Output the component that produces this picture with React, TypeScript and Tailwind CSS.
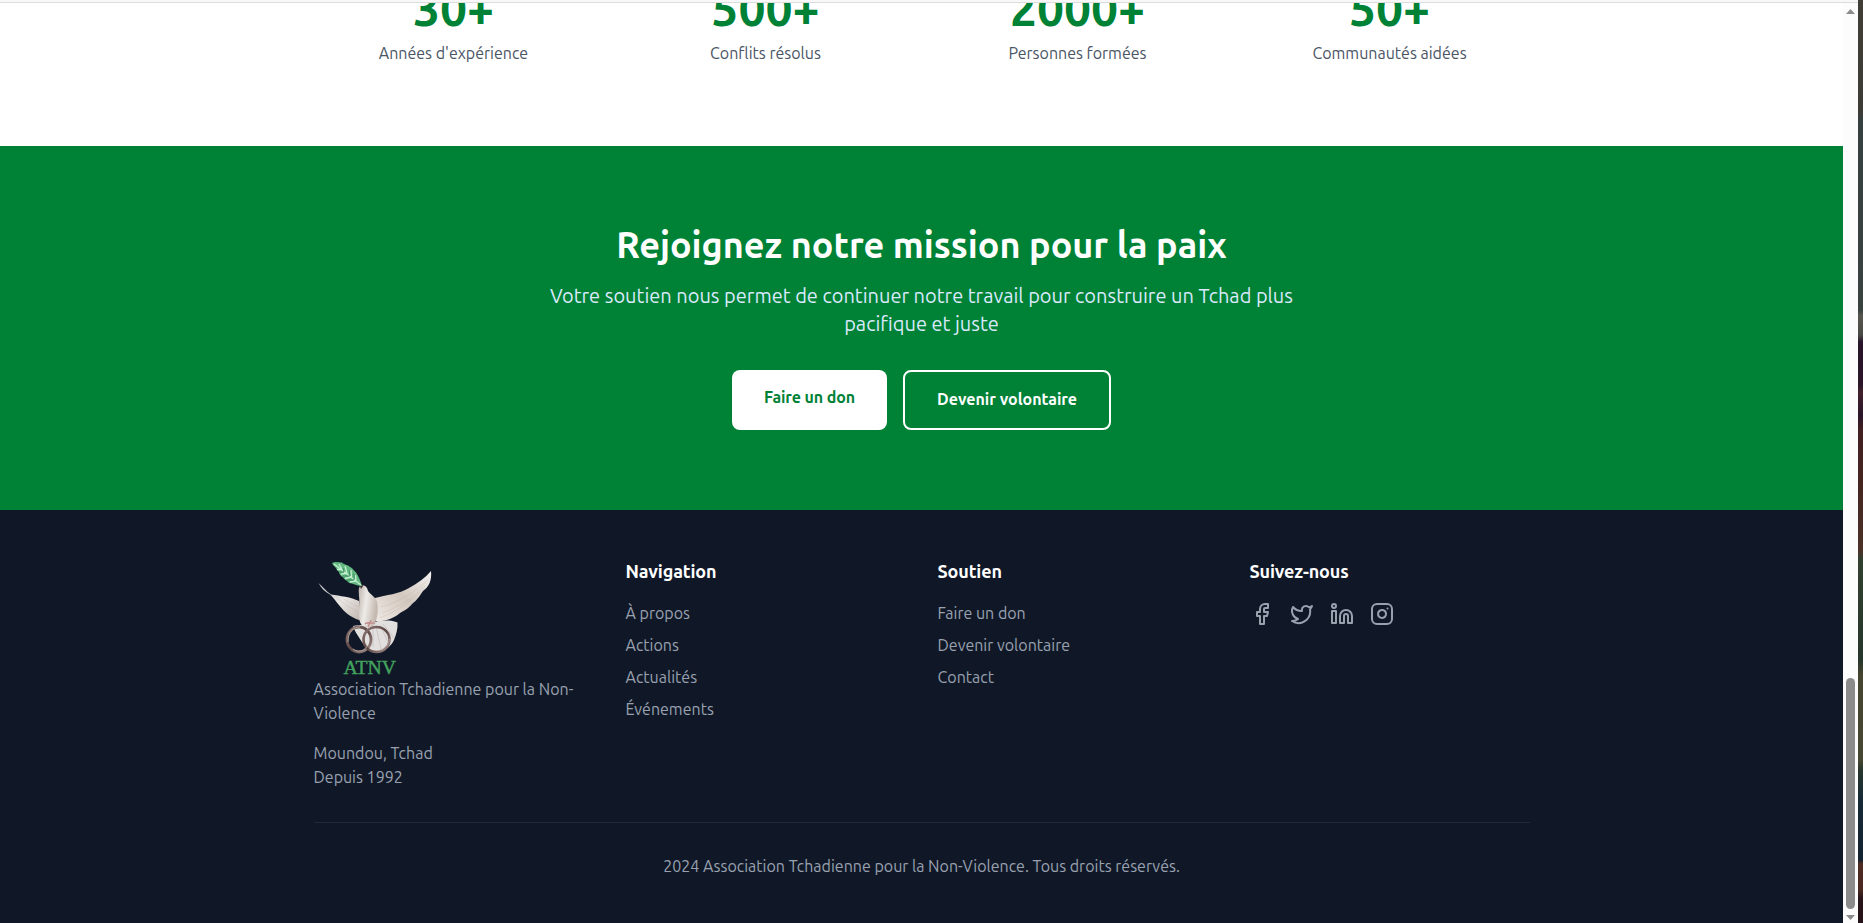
import type { ReactNode } from "react";
import { Facebook, Instagram, Linkedin, Twitter } from "lucide-react";

const stats = [
  { value: "30+", label: "Années d'expérience" },
  { value: "500+", label: "Conflits résolus" },
  { value: "2000+", label: "Personnes formées" },
  { value: "50+", label: "Communautés aidées" },
];

const navigation = ["À propos", "Actions", "Actualités", "Événements"];
const support = ["Faire un don", "Devenir volontaire", "Contact"];
const socials = [Facebook, Twitter, Linkedin, Instagram];

function Logo() {
  return (
    <svg viewBox="0 0 120 120" className="mt-px -mb-px h-[120px] w-[120px]" role="img">
      <defs>
        <linearGradient id="wingRight" x1="0" y1="1" x2="1" y2="0">
          <stop offset="0" stopColor="#efe9e4" />
          <stop offset="0.5" stopColor="#d3c8bf" />
          <stop offset="1" stopColor="#f4f2f1" />
        </linearGradient>
        <linearGradient id="wingLeft" x1="0" y1="0" x2="1" y2="1">
          <stop offset="0" stopColor="#b9b9bd" />
          <stop offset="0.5" stopColor="#e9e6e4" />
          <stop offset="1" stopColor="#bfb3ab" />
        </linearGradient>
        <linearGradient id="body" x1="0" y1="0" x2="1" y2="0.3">
          <stop offset="0" stopColor="#bdb3ac" />
          <stop offset="0.45" stopColor="#eeebe8" />
          <stop offset="1" stopColor="#c4b8af" />
        </linearGradient>
        <linearGradient id="ring" x1="0" y1="0" x2="1" y2="1">
          <stop offset="0" stopColor="#8d7672" />
          <stop offset="0.5" stopColor="#5d4744" />
          <stop offset="1" stopColor="#a58f8b" />
        </linearGradient>
      </defs>
      <path d="M4.500 25 C8 28 12 33 17 36.500 C26 38 37 39 45 43 L48 63 C40 61 32 56 27.500 50 C22 44 20 40 16 36.500 C11 34 7 30 4.500 25 Z" fill="url(#wingLeft)" />
      <path d="M61 40 C72 37 85 36 95 30 C104 25 111 20 117 13 C118 22 115 29 109 33 C105 39 103 42 98 46 C94 51 91 52 86 55 C80 60 71 64 62 63 Z" fill="url(#wingRight)" />
      <path d="M66 60 C78 55 93 47 106 34 M68 55 C82 50 96 42 111 28 M67 49 C82 45 99 36 114 22 M23 40 C30 46 38 51 45 54 M30 41 C36 45 41 48 46 49" fill="none" stroke="#b5a79d" strokeWidth="0.6" opacity="0.45" />
      <path d="M64 63 C71 62 79 62 83.500 64.500 C84 71 82 77 80 82 C77 89 69 94 64 94 C56 94 50 88 46 81 C43 76 40 72 39 68 C46 67 56 66 64 63 Z" fill="#e2dfdf" />
      <path d="M66 67 L75 86 M69 66 L80 80 M62 68 L67 91 M59 69 L59 89" stroke="#b3a8a4" strokeWidth="0.6" opacity="0.7" />
      <path d="M46 28 C50 26 53 28 54 33 C57 37 62 39 63 44 C65 53 63 62 60 67 C56 71 48 70 46 64 C44 57 46 45 45 38 C45 34 44 31 46 28 Z" fill="url(#body)" />
      <path d="M45.500 27 L49.500 27.500 L47 31 Z" fill="#443536" />
      <path d="M18 5 C22 3 25 5 28 4.500 C30 7 34 6.500 36 9 C39 10 40 13 42.500 15 C44 18 46 21 48 28 C42 28 39 25 35 25 C33 22 30 22 29 19 C25 18 26 14 23 12 C22 9 19 8 18 5 Z" fill="#63b881" />
      <path d="M20 6 L47 27 M25 6 L28 11.500 L23 11.500 M31 8 L33 15.500 L27 16 M37 12 L37.500 19 L31 20.500 M41.500 17 L42 23 L36 24" fill="none" stroke="#c4efd1" strokeWidth="1.300" />
      <path d="M29 10 L30 14 L25 14 M35 12 L36 18 L29 18 M40 16 L40 22 L33 22" fill="none" stroke="#2f7d4d" strokeWidth="0.700" />
      <path d="M51 66 C54 63 59 66 61 65 M54 69 L57 62" fill="none" stroke="#c28c8b" strokeWidth="1.400" />
      <ellipse cx="45" cy="81.500" rx="12" ry="12.500" fill="none" stroke="url(#ring)" strokeWidth="2.800" />
      <ellipse cx="62.500" cy="81.500" rx="13" ry="12.500" fill="none" stroke="url(#ring)" strokeWidth="2.600" />
      <path d="M34 84 C34 74 39 69 46 69 M39 91 C44 95 51 93 54 87 M66 92 C71 91 75 86 75.500 81" fill="none" stroke="#c2b2ae" strokeWidth="0.800" />
      <text x="29.500" y="115.500" textLength="52.500" lengthAdjust="spacingAndGlyphs" fill="#43a25e" stroke="#43a25e" strokeWidth="0.400" className="font-['Liberation_Serif',serif] text-[18.5px]">
        ATNV
      </text>
    </svg>
  );
}

function FooterColumn({ title, children }: { title: string; children: ReactNode }) {
  return (
    <div>
      <h3 className="mb-4 text-lg leading-7 font-semibold tracking-[-0.12px] text-white">{title}</h3>
      {children}
    </div>
  );
}

function LinkList({ items }: { items: string[] }) {
  return (
    <ul className="space-y-2">
      {items.map((item) => (
        <li key={item}>
          <a href="#">{item}</a>
        </li>
      ))}
    </ul>
  );
}

function Scrollbar() {
  return (
    <div className="flex w-[15px] shrink-0 flex-col items-center bg-[#fcfcfc] pt-1.5 pb-[3px]">
      <svg viewBox="0 0 9 5" className="h-[5px] w-[9px]">
        <path d="M4.500 0 L9 5 H0 Z" fill="#8b8b8b" />
      </svg>
      <div className="mt-auto mb-1.5 h-[231px] w-[9px] rounded-full bg-[#8b8b8b]" />
      <svg viewBox="0 0 9 5" className="h-[5px] w-[9px]">
        <path d="M0 0 H9 L4.500 5 Z" fill="#8b8b8b" />
      </svg>
    </div>
  );
}

export default function App() {
  return (
    <div className="flex h-[923px] w-[1863px] overflow-hidden bg-white font-['Ubuntu','Noto_Sans',sans-serif] text-base">
      <div className="flex w-[1858px] shrink-0 flex-col">
        <div className="h-[3px] shrink-0 border-b border-[#dcdcdc] bg-[#f8f8f8]" />
        <div className="flex min-h-0 flex-1">
          <main className="flex w-[1843px] shrink-0 flex-col justify-start overflow-hidden">
            <section className="h-[143px] shrink-0 overflow-hidden bg-white">
              <div className="mx-auto -mt-[19px] grid max-w-7xl grid-cols-4 gap-8 px-8 text-center">
                {stats.map((stat) => (
                  <div key={stat.label}>
                    <div className="mb-[9px] text-5xl leading-none font-bold text-[#008236]">{stat.value}</div>
                    <div className="text-[#4a5565]">{stat.label}</div>
                  </div>
                ))}
              </div>
            </section>

            <section className="shrink-0 bg-[#008236] pt-[79px] pb-20 text-center">
              <h2 className="mb-[17px] text-4xl leading-10 font-semibold text-white">Rejoignez notre mission pour la paix</h2>
              <p className="mx-auto mb-8 max-w-3xl text-xl leading-7 text-[#dbeafe]">
                Votre soutien nous permet de continuer notre travail pour construire un Tchad plus pacifique et juste
              </p>
              <div className="flex justify-center gap-4">
                <a href="#" className="rounded-lg bg-white px-8 pt-[15px] pb-[17px] font-semibold tracking-[-0.1px] text-[#008236]">
                  Faire un don
                </a>
                <a href="#" className="rounded-lg border-2 border-white px-8 pt-[15px] pb-[17px] font-semibold text-white">
                  Devenir volontaire
                </a>
              </div>
            </section>

            <footer className="shrink-0 bg-[#101828] pt-[47px] pb-12 text-[#99a1af]">
              <div className="mx-auto max-w-7xl px-8">
                <div className="grid grid-cols-4 gap-8">
                  <div>
                    <Logo />
                    <p className="mb-4">Association Tchadienne pour la Non-Violence</p>
                    <p>
                      Moundou, Tchad
                      <br />
                      Depuis 1992
                    </p>
                  </div>
                  <FooterColumn title="Navigation">
                    <LinkList items={navigation} />
                  </FooterColumn>
                  <FooterColumn title="Soutien">
                    <LinkList items={support} />
                  </FooterColumn>
                  <FooterColumn title="Suivez-nous">
                    <div className="mt-[17px] flex gap-4">
                      {socials.map((Icon, index) => (
                        <a key={index} href="#">
                          <Icon size={24} />
                        </a>
                      ))}
                    </div>
                  </FooterColumn>
                </div>
                <div className="mt-[33px] border-t border-[#1e2939] pt-[31px] text-center">
                  2024 Association Tchadienne pour la Non-Violence. Tous droits réservés.
                </div>
              </div>
            </footer>
          </main>
          <Scrollbar />
        </div>
      </div>
      <div className="w-[5px] shrink-0 bg-[linear-gradient(#3f3d35_0px,#3d3b36_110px,#353f3f_120px,#3a4240_310px,#56554e_316px,#4a4a46_335px,#28152a_342px,#2a1529_385px,#42202a_392px,#2a1529_415px,#421f22_430px,#452420_480px,#4b3128_550px,#31402f_560px,#26362c_660px,#46452f_675px,#464730_760px,#28362f_770px,#152a35_800px,#14222f_860px,#4f2c22_864px,#4a2820_890px,#28151a_898px,#241318_923px)]" />
    </div>
  );
}
